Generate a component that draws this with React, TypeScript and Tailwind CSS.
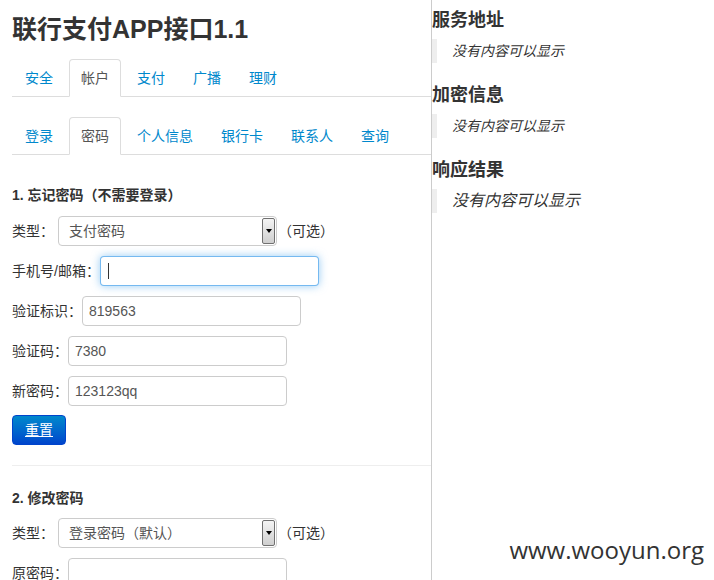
import React from 'react'

const topTabs = ['安全', '帐户', '支付', '广播', '理财']
const subTabs = ['登录', '密码', '个人信息', '银行卡', '联系人', '查询']

function Tabs(props: { items: string[]; active: string; className?: string }) {
  return (
    <ul className={'flex gap-1 border-b border-[#ddd] pl-px ' + (props.className || '')}>
      {props.items.map((item) => {
        const on = item === props.active
        return (
          <li key={item} className="-mb-px">
            <a
              className={
                'block rounded-t-[4px] border px-[11px] py-2 text-[14px] leading-5 ' +
                (on
                  ? 'border-[#ddd] border-b-transparent bg-white text-[#555]'
                  : 'border-transparent text-[#0088cc]')
              }
            >
              {item}
            </a>
          </li>
        )
      })}
    </ul>
  )
}

function Select(props: { value: string }) {
  return (
    <div className="ml-1 flex h-[30px] w-[219px] items-center justify-between rounded-[4px] border border-[#ccc] bg-white pl-[10px] pr-px">
      <span className="text-[14px] text-[#555]">{props.value}</span>
      <span className="flex h-[26px] w-[13px] items-center justify-center rounded-[2px] border border-[#707070] bg-gradient-to-b from-[#f4f4f4] to-[#cfcfcf]">
        <span className="h-0 w-0 border-x-[3px] border-t-[4px] border-x-transparent border-t-black" />
      </span>
    </div>
  )
}

function Field(props: { label: string; value?: string; focused?: boolean }) {
  return (
    <div className="mb-[10px] flex h-[30px] items-center">
      <label className="text-[14px] text-[#333]">{props.label}</label>
      {props.focused ? (
        <div className="flex h-[30px] w-[219px] items-center rounded-[4px] border border-[rgba(82,168,236,0.8)] bg-white px-[7px] shadow-[0_0_8px_rgba(82,168,236,0.6)]">
          <span className="h-4 w-px bg-[#333]" />
        </div>
      ) : (
        <div className="flex h-[30px] w-[219px] items-center rounded-[4px] border border-[#ccc] bg-white px-[6px] text-[14px] text-[#555]">
          {props.value}
        </div>
      )}
    </div>
  )
}

function Panel(props: { title: string; big?: boolean }) {
  return (
    <div>
      <h4 className="mb-[7px] text-[18px] font-bold leading-6 text-[#333]">{props.title}</h4>
      <blockquote className="mb-5 flex h-6 items-center border-l-[5px] border-[#eee] pl-[15px]">
        <span className={'italic text-[#333] ' + (props.big ? 'text-[16px]' : 'text-[14px]')}>
          没有内容可以显示
        </span>
      </blockquote>
    </div>
  )
}

export default function App() {
  return (
    <div
      className="relative flex h-[580px] w-[714px] overflow-hidden bg-white text-[#333]"
      style={{ fontFamily: '"Liberation Sans", "Noto Sans CJK SC", sans-serif' }}
    >
      <div className="w-[432px] shrink-0 border-r border-[#ccc] pl-3 pt-[14px]">
        <h1 className="h-[30px] text-[25px] font-bold leading-[30px] text-[#333]">联行支付APP接口1.1</h1>
        <Tabs items={topTabs} active="帐户" className="mt-[15px]" />
        <Tabs items={subTabs} active="密码" className="mt-5" />

        <h5 className="mt-[30px] text-[14px] font-bold leading-5">1. 忘记密码（不需要登录）</h5>
        <div className="mt-[11px]">
          <div className="mb-[10px] flex h-[30px] items-center">
            <label className="text-[14px]">类型：</label>
            <Select value="支付密码" />
            <span className="ml-px text-[14px]">（可选）</span>
          </div>
          <Field label="手机号/邮箱：" focused />
          <Field label="验证标识：" value="819563" />
          <Field label="验证码：" value="7380" />
          <Field label="新密码：" value="123123qq" />
          <button className="mt-[-1px] h-[30px] rounded-[4px] border border-[#04c] bg-gradient-to-b from-[#0088cc] to-[#0044cc] px-[12px] text-[14px] text-white underline">
            重置
          </button>
        </div>

        <div className="mt-5 border-t border-[#eee]" />

        <h5 className="mt-[22px] text-[14px] font-bold leading-5">2. 修改密码</h5>
        <div className="mt-[10px]">
          <div className="mb-[10px] flex h-[30px] items-center">
            <label className="text-[14px]">类型：</label>
            <Select value="登录密码（默认）" />
            <span className="ml-px text-[14px]">（可选）</span>
          </div>
          <Field label="原密码：" value="" />
        </div>
      </div>

      <div className="flex-1 pt-2">
        <Panel title="服务地址" />
        <Panel title="加密信息" />
        <Panel title="响应结果" big />
      </div>

      <div
        className="absolute bottom-[12px] right-[10px] text-[24px] text-[#333]"
        style={{ fontFamily: '"Open Sans", sans-serif' }}
      >
        www.wooyun.org
      </div>
    </div>
  )
}
